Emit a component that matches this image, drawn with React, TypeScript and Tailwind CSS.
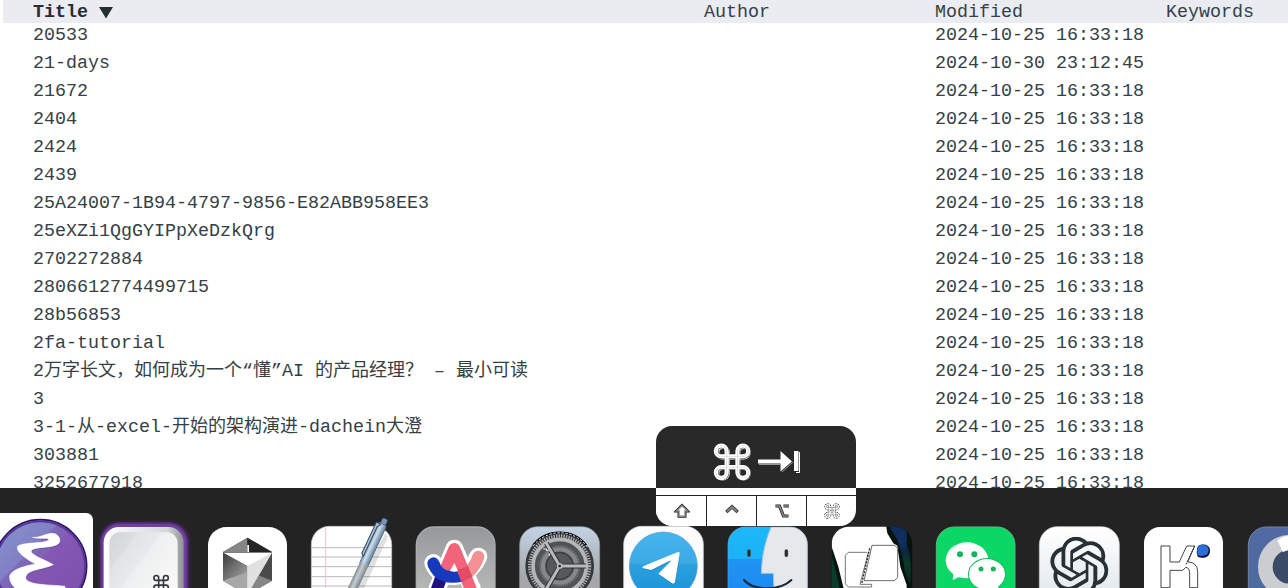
import React from "react";
import { SiOpenai } from "react-icons/si";

const STAMP = "2024-10-25 16:33:18";
const ROWS: [string, string][] = [
  ["20533", STAMP],
  ["21-days", "2024-10-30 23:12:45"],
  ["21672", STAMP],
  ["2404", STAMP],
  ["2424", STAMP],
  ["2439", STAMP],
  ["25A24007-1B94-4797-9856-E82ABB958EE3", STAMP],
  ["25eXZi1QgGYIPpXeDzkQrg", STAMP],
  ["2702272884", STAMP],
  ["2806612774499715", STAMP],
  ["28b56853", STAMP],
  ["2fa-tutorial", STAMP],
  ["2万字长文，如何成为一个“懂”AI 的产品经理？ – 最小可读", STAMP],
  ["3", STAMP],
  ["3-1-从-excel-开始的架构演进-dachein大澄", STAMP],
  ["303881", STAMP],
  ["3252677918", STAMP],
];

const CJK = /([\u3000-\u9fff\uff00-\uffef]+)/;

function Mixed({ text }: { text: string }) {
  return (
    <>
      {text.split(CJK).map((part, i) =>
        CJK.test(part) ? (
          <span key={i} className="font-['Noto_Sans_CJK_SC',sans-serif] text-[18px] leading-none">
            {part}
          </span>
        ) : (
          part
        )
      )}
    </>
  );
}

const COLS = "grid grid-cols-[671px_231px_231px_1fr] whitespace-pre";
const COMMAND = "M15 6v12a3 3 0 1 0 3-3H6a3 3 0 1 0 3 3V6a3 3 0 1 0-3 3h12a3 3 0 1 0-3-3";
const SWIRL =
  "M98 88C118 91 140 76 155 76C174 76 183 92 178 104C168 122 104 114 93 128C92 142 132 154 160 170C132 184 77 184 77 210C80 232 150 230 195 235L195 250L60 250C40 240 28 222 29 205C34 184 76 174 106 168C88 158 50 136 52 118C56 102 128 108 146 97C150 86 116 95 98 88Z";

/* Dock icons are drawn in thirds of a pixel, with the origin at the strip they belong to. */
function Icon({ slot, ox, children }: { slot: number; ox: number; children: React.ReactNode }) {
  return (
    <svg width="104" height="100" viewBox={`${-13 + slot * 104} 488 104 100`} className="shrink-0 overflow-visible">
      <g transform={`translate(${ox} 485) scale(0.33333)`}>{children}</g>
    </svg>
  );
}

function Emacs() {
  return (
    <Icon slot={0} ox={0}>
      <rect x="-40" y="84" width="319" height="300" rx="20" fill="#fff" />
      <defs>
        <linearGradient id="em" x1="0" y1="0" x2="1" y2="1">
          <stop offset="0" stopColor="#8496cf" />
          <stop offset=".36" stopColor="#8180c4" />
          <stop offset=".37" stopColor="#7d6bba" />
          <stop offset=".46" stopColor="#8061b7" />
          <stop offset=".47" stopColor="#8458b4" />
          <stop offset="1" stopColor="#7a4dab" />
        </linearGradient>
      </defs>
      <circle cx="121" cy="243" r="139" fill="url(#em)" stroke="#2c1462" strokeWidth="5" />
      <circle cx="121" cy="243" r="134" fill="none" stroke="#5a3597" strokeWidth="5" />
      <g transform="translate(0 69)">
        <path d={SWIRL} fill="#54407f" opacity=".6" transform="translate(2 3)" />
        <path d={SWIRL} fill="#fff" stroke="#fff" strokeWidth="2" />
      </g>
    </Icon>
  );
}

function Keycap() {
  return (
    <Icon slot={1} ox={0}>
      <defs>
        <linearGradient id="kc" x1="0" y1="0" x2="1" y2="1">
          <stop offset="0" stopColor="#d3d4d6" />
          <stop offset=".2" stopColor="#dcddde" />
          <stop offset=".21" stopColor="#e2e3e4" />
          <stop offset=".38" stopColor="#e8e9ea" />
          <stop offset=".39" stopColor="#eeeff0" />
          <stop offset="1" stopColor="#fff" />
        </linearGradient>
        <linearGradient id="ke">
          <stop offset="0" stopColor="#fff" />
          <stop offset=".8" stopColor="#d4d6d8" />
          <stop offset="1" stopColor="#8d9092" />
        </linearGradient>
      </defs>
      <rect x="294" y="106" width="279" height="300" rx="64" fill="#402457" opacity=".45" />
      <rect x="300" y="112" width="265" height="300" rx="60" fill="#562f7a" />
      <rect x="305" y="117" width="254" height="300" rx="54" fill="#7040a0" />
      <rect x="311" y="126" width="240" height="300" rx="46" fill="url(#ke)" />
      <rect x="328" y="142" width="205" height="280" rx="32" fill="url(#kc)" />
      <path d={COMMAND} transform="translate(454.500 264.500) scale(2.4)" fill="none" stroke="#35383b" strokeWidth="2" />
    </Icon>
  );
}

function Cursor() {
  return (
    <Icon slot={2} ox={0}>
      <defs>
        <linearGradient id="cu" x1="0" y1="0" x2="1" y2="1">
          <stop offset="0" stopColor="#3b3b3b" />
          <stop offset="1" stopColor="#a9a9a9" />
        </linearGradient>
      </defs>
      <rect x="624" y="126" width="237" height="300" rx="55" fill="#fff" />
      <path d="M742 158L816 201V287L742 330L669 287V201Z" fill="#555" />
      <path d="M742 158V201H669Z" fill="#858585" />
      <path d="M742 158V201H816Z" fill="#252525" />
      <path d="M669 203H816L742 330V243Z" fill="#fff" />
      <path d="M669 203L742 243V272L669 287Z" fill="url(#cu)" />
      <path d="M669 287L742 262V330Z" fill="#a8a8a8" />
      <path d="M816 203V287L766 290Z" fill="#4a4a4a" />
      <path d="M768 268L816 287L742 330Z" fill="#858585" />
      <path d="M742 243L816 203L742 330Z" fill="#e1e1e1" />
      <path d="M742 180H747V201H742Z" fill="#fff" />
    </Icon>
  );
}

function TextEdit() {
  return (
    <Icon slot={3} ox={300}>
      <defs>
        <linearGradient id="pn">
          <stop offset="0" stopColor="#6e8aa6" />
          <stop offset=".35" stopColor="#d2e0ea" />
          <stop offset="1" stopColor="#5f7f9f" />
        </linearGradient>
        <linearGradient id="pg">
          <stop offset="0" stopColor="#828b91" />
          <stop offset=".4" stopColor="#c7ced2" />
          <stop offset="1" stopColor="#78838b" />
        </linearGradient>
      </defs>
      <rect x="34" y="124" width="241" height="300" rx="54" fill="#fefefe" stroke="#c8c8c8" strokeWidth="2" />
      <path d="M35 188H274M35 216H274M35 245H274M35 275H274M35 303H274" stroke="#b9bbbd" strokeWidth="3" />
      <path d="M77 127V320" stroke="#f2c3c9" strokeWidth="3" />
      <path d="M256 145L264 155L190 315H165Z" fill="#000" opacity=".12" />
      <g transform="translate(256 101) rotate(25)">
        <rect x="-8" y="0" width="17" height="24" rx="5" fill="#7795ba" stroke="#33485f" strokeWidth="2" />
        <rect x="-14" y="18" width="27" height="136" rx="5" fill="url(#pn)" stroke="#46596b" strokeWidth="2" />
        <rect x="-14" y="148" width="28" height="114" fill="url(#pg)" />
        <path d="M-20 20V124L-12 130V32L-5 22Z" fill="#a9c0d4" stroke="#2e475f" strokeWidth="3" />
      </g>
    </Icon>
  );
}

function Arc() {
  return (
    <Icon slot={4} ox={300}>
      <defs>
        <linearGradient id="ar" x1="0" y1="0" x2="0" y2="1">
          <stop offset="0" stopColor="#969899" />
          <stop offset=".7" stopColor="#b9bbbb" />
        </linearGradient>
      </defs>
      <rect x="349" y="126" width="236" height="300" rx="54" fill="url(#ar)" stroke="#a9abac" strokeWidth="4" />
      <g fill="none" strokeLinecap="round" strokeLinejoin="round">
        <path d="M412 310L463 190L516 310" stroke="#fff" strokeWidth="52" />
        <path d="M400 234C422 288 500 290 535 215" stroke="#fff" strokeWidth="54" />
        <path d="M440 240H485V270H440Z" fill="#fff" stroke="none" />
        <path d="M410 315L424 276" stroke="#20127c" strokeWidth="36" />
        <path d="M502 264C520 250 530 232 535 215" stroke="#f39094" strokeWidth="36" />
        <path d="M439 248L463 192L512 312" stroke="#f1647a" strokeWidth="36" />
        <path d="M400 235C414 276 452 282 488 270" stroke="#1739bd" strokeWidth="36" strokeLinecap="butt" />
        <path d="M400 235L401 238" stroke="#1739bd" strokeWidth="36" />
        <path d="M487 250L501 283" stroke="#e34c64" strokeWidth="36" strokeLinecap="butt" />
      </g>
      <path d="M463 234L474 258Q463 262 450 258Z" fill="#fff" />
    </Icon>
  );
}

function Settings() {
  return (
    <Icon slot={5} ox={300}>
      <defs>
        <linearGradient id="st" x1="0" y1="0" x2="0" y2="1">
          <stop offset="0" stopColor="#c3d3e4" />
          <stop offset=".5" stopColor="#a5a8ab" />
        </linearGradient>
      </defs>
      <rect x="659" y="125" width="240" height="300" rx="54" fill="url(#st)" stroke="#96999c" strokeWidth="2" />
      <circle cx="779" cy="243" r="103" fill="#34373a" />
      <path d="M699 180A103 103 0 0 1 859 180" fill="none" stroke="#000" strokeWidth="5" />
      <path d="M700 182A101 101 0 0 1 862 186" fill="none" stroke="#fff" strokeWidth="3" strokeDasharray="7 5" />
      <circle cx="779" cy="243" r="90" fill="none" stroke="#aeb1b2" strokeWidth="10" strokeDasharray="4 3.500" />
      <circle cx="779" cy="243" r="80" fill="#505355" stroke="#b4b7b8" strokeWidth="11" />
      <circle cx="779" cy="243" r="59" fill="none" stroke="#7f8284" strokeWidth="5" strokeDasharray="3 3" />
      <circle cx="779" cy="243" r="50" fill="#46494b" stroke="#85888a" strokeWidth="13" />
      <circle cx="779" cy="243" r="40" fill="#56595b" stroke="#35383a" strokeWidth="3" />
      <path d="M779 243H858M779 243L739 174M779 243L739 312" stroke="#333638" strokeWidth="15" />
      <path d="M779 243H862M779 243L737 171M779 243L737 315" stroke="#b8bbbc" strokeWidth="9" />
      <circle cx="779" cy="243" r="9" fill="#b8bbbc" />
      <circle cx="779" cy="243" r="4" fill="#222" />
      <path d="M730 192H740V197H746M748 206V212" stroke="#fff" strokeWidth="3" fill="none" />
    </Icon>
  );
}

function Telegram() {
  const plane =
    "M204 201Q210 200 209 208L195 290Q193 299 185 294L145 266L181 230Q184 224 177 228L124 255L100 250Q94 247 101 243Z";
  return (
    <Icon slot={6} ox={610}>
      <defs>
        <linearGradient id="tg" x1="0" y1="0" x2="0" y2="1">
          <stop offset="0" stopColor="#46b4ee" />
          <stop offset=".46" stopColor="#3caae4" />
          <stop offset=".48" stopColor="#2ca0df" />
          <stop offset="1" stopColor="#1791d4" />
        </linearGradient>
      </defs>
      <rect x="41" y="124" width="239" height="300" rx="54" fill="#fcfcfd" stroke="#d5d7d9" strokeWidth="2" />
      <circle cx="160" cy="243" r="102" fill="url(#tg)" stroke="#5c9ac8" strokeWidth="2" />
      <path d={plane} fill="#1a79b2" opacity=".45" transform="translate(2 4)" />
      <path d={plane} fill="#fff" />
    </Icon>
  );
}

function Finder() {
  return (
    <Icon slot={7} ox={610}>
      <defs>
        <clipPath id="fc">
          <rect x="353" y="125" width="240" height="300" rx="54" />
        </clipPath>
        <linearGradient id="fl" x1="0" y1="0" x2="0" y2="1">
          <stop offset="0" stopColor="#1cb8f7" />
          <stop offset=".5" stopColor="#1ab3f6" />
          <stop offset=".52" stopColor="#1e94f3" />
          <stop offset="1" stopColor="#1e8cf2" />
        </linearGradient>
      </defs>
      <g clipPath="url(#fc)">
        <rect x="353" y="125" width="240" height="190" fill="url(#fl)" />
        <path d="M484 125H600V320H492L490 265H454C455 215 466 165 484 125Z" fill="#e6e8eb" />
        <path d="M484 125C466 165 455 215 454 265H490L492 312" fill="none" stroke="#9ec6e4" strokeWidth="3" />
        <path d="M417 198V211M529 198V211" stroke="#5c5450" strokeWidth="11" strokeLinecap="round" />
        <path d="M417 198V211M529 198V211" stroke="#252a31" strokeWidth="7" strokeLinecap="round" />
        <path d="M402 285C430 318 510 318 544 285" fill="none" stroke="#16283c" strokeWidth="6" strokeLinecap="round" />
      </g>
      <rect x="354" y="126" width="238" height="300" rx="53" fill="none" stroke="#8ea3b0" strokeWidth="2" opacity=".7" />
    </Icon>
  );
}

function Panels() {
  return (
    <Icon slot={8} ox={610}>
      <defs>
        <clipPath id="pc">
          <rect x="665" y="125" width="242" height="300" rx="52" />
        </clipPath>
        <linearGradient id="pd" x1="0" y1="0" x2="0" y2="1">
          <stop offset="0" stopColor="#123266" />
          <stop offset=".28" stopColor="#0c2740" />
          <stop offset=".5" stopColor="#0b3a27" />
          <stop offset="1" stopColor="#062a1d" />
        </linearGradient>
      </defs>
      <g clipPath="url(#pc)">
        <rect x="664" y="124" width="244" height="190" fill="#06130e" />
        <path d="M835 120H890V190L875 185Z" fill="#102e5c" />
        <path d="M862 165C890 155 910 210 900 300L885 260C880 220 872 190 862 165Z" fill="url(#pd)" />
        <path d="M664 205L690 312H664Z" fill="#0b3c2a" />
        <path d="M665 120H828L832 145L850 175L862 182L871 245L890 300V315H702L685 245L665 185Z" fill="#fff" />
      </g>
      <path d="M786 181H854L863 190V277L853 287H762Z" fill="#fff" stroke="#222" strokeWidth="2" />
      <path d="M771 202H715L706 211V296L715 306H785V298H750L775 202" fill="none" stroke="#333" strokeWidth="2" />
      <path d="M779 190L755 296" stroke="#222" strokeWidth="4" strokeDasharray="6 4" />
    </Icon>
  );
}

function WeChat() {
  return (
    <Icon slot={9} ox={915}>
      <rect x="64" y="126" width="236" height="300" rx="54" fill="#0bd766" stroke="#5cb982" strokeWidth="3" />
      <g fill="#fff">
        <ellipse cx="156" cy="226" rx="64" ry="54" />
        <path d="M116 258L113 285L140 272Z" />
        <ellipse cx="216" cy="268" rx="57" ry="49" fill="#14b85d" />
        <ellipse cx="216" cy="268" rx="54" ry="46" />
        <path d="M225 305L250 312V290Z" />
      </g>
      <g fill="#12b75b">
        <circle cx="135" cy="208" r="9" />
        <circle cx="178" cy="208" r="9" />
        <circle cx="198" cy="252" r="7.500" />
        <circle cx="235" cy="252" r="7.500" />
      </g>
    </Icon>
  );
}

function ChatGPT() {
  return (
    <Icon slot={10} ox={915}>
      <defs>
        <linearGradient id="cg" x1="0" y1="0" x2="0" y2="1">
          <stop offset="0" stopColor="#fff" />
          <stop offset=".6" stopColor="#e6ebee" />
        </linearGradient>
      </defs>
      <rect x="373" y="125" width="240" height="300" rx="54" fill="url(#cg)" stroke="#cfd3d6" strokeWidth="2" />
      <SiOpenai x={405} y={155} size={176} color="#263035" />
    </Icon>
  );
}

function Kimi() {
  return (
    <Icon slot={11} ox={915}>
      <rect x="687" y="126" width="237" height="300" rx="48" fill="#fff" />
      <path
        d="M738 183H765V231H793L815 183H839L818 231Q848 231 848 262V308H824V268Q824 247 812 247L803 256H765V308H738Z"
        fill="#fff"
        stroke="#222"
        strokeWidth="2.500"
      />
      <path d="M839 183L813 238" stroke="#111" strokeWidth="3" strokeDasharray="5 3" />
      <path d="M849 183C859 175 885 176 885 197C885 216 866 221 852 217C843 213 844 195 849 183Z" fill="#070c28" />
      <path d="M850 184C858 176 881 178 881 196C881 213 863 215 848 211C846 203 846 191 850 184Z" fill="#2c6ddc" />
    </Icon>
  );
}

function RingApp() {
  return (
    <Icon slot={12} ox={915}>
      <rect x="1000" y="126" width="240" height="300" rx="54" fill="#5069a3" stroke="#74849f" strokeWidth="3" />
      <path d="M1002 245L1045 300V330H1002Z" fill="#4d6c9d" />
      <circle cx="1124" cy="245" r="73" fill="#3b4a67" stroke="#cccdd0" strokeWidth="44" />
      <path d="M1087 166Q1105 151 1130 150V194Q1115 195 1104 202Z" fill="#fff" />
    </Icon>
  );
}

function HudKey({ children }: { children: React.ReactNode }) {
  return (
    <div className="flex w-[50px] items-center justify-center border-l border-[#222] first:border-white">
      <svg width="16" height="16" viewBox="0 0 16 16" fill="none">
        {children}
      </svg>
    </div>
  );
}

function Hud() {
  const shift = "M8 2.500L13.500 8H11V13.300H5V8H2.500Z";
  const option = "M1.500 3H5.500L9.500 13H14.500M9.500 3H15";
  return (
    <div className="absolute left-[656px] top-[426px] flex h-[100px] w-[200px] flex-col overflow-hidden rounded-[16px] bg-white">
      <div className="flex h-[62px] items-center justify-center bg-[#292929]">
        <svg width="200" height="62" viewBox="656 426 200 62" fill="none">
          <g transform="translate(.6 .3)">
            <path d={COMMAND} transform="translate(711.500 441.500) scale(1.75)" stroke="#fff" strokeWidth="2.300" />
            <path d={COMMAND} transform="translate(709.900 439.900) scale(1.8)" stroke="#292929" strokeWidth="2.900" />
            <path d={COMMAND} transform="translate(709.900 439.900) scale(1.8)" stroke="#fff" strokeWidth="2.400" />
            <path d={COMMAND} transform="translate(709.900 439.900) scale(1.8)" stroke="#cfcfcf" strokeWidth=".35" />
          </g>
          <path d="M758 459.500H780.500V451L792 461.500L780.500 471.500V463.500H758Z" fill="#fff" />
          <path d="M759 464.500H780M782 472L793 462" stroke="#999" />
          <path d="M794 451H798.500V471H794Z" fill="#fff" />
          <path d="M799.500 452V472.500H796" stroke="#fff" />
        </svg>
      </div>
      <div className="mt-[7px] flex h-[31px] border-t border-[#222]">
        <HudKey>
          <path d={shift} stroke="#222" strokeWidth="3" />
          <path d={shift} stroke="#858585" strokeWidth="1.500" fill="#fff" />
        </HudKey>
        <HudKey>
          <path d="M2.300 9L8 3.800L13.700 9" stroke="#333" strokeWidth="3.400" />
          <path d="M3 8.400L8 4L13 8.400" stroke="#888" strokeWidth="1.800" />
        </HudKey>
        <HudKey>
          <path d={option} stroke="#222" strokeWidth="3.200" />
          <path d={option} stroke="#8a8a8a" strokeWidth="1.600" />
        </HudKey>
        <HudKey>
          <path d={COMMAND} transform="translate(-.4 -.4) scale(.7)" stroke="#333" strokeWidth="3.800" strokeDasharray="1.600 .7" />
          <path d={COMMAND} transform="translate(-.4 -.4) scale(.7)" stroke="#fff" strokeWidth="1.900" />
        </HudKey>
      </div>
    </div>
  );
}

export default function App() {
  return (
    <div className="relative flex h-[588px] w-[1288px] flex-col overflow-hidden bg-white font-['Liberation_Mono','Noto_Sans_CJK_SC',monospace] text-[18.33px] text-[#354045]">
      <div className="flex h-[488px] flex-col overflow-hidden">
        <header className={`${COLS} ml-[3px] h-[23px] shrink-0 bg-[#ebecf1] pl-[30px] leading-[26px]`}>
          <div className="flex font-bold text-[#252e32]">
            Title
            <svg width="16" height="23" viewBox="0 0 16 23" className="ml-[10px]">
              <path d="M1 7H15L8 18.500Z" fill="#252e32" />
            </svg>
          </div>
          <div>Author</div>
          <div>Modified</div>
          <div>Keywords</div>
        </header>
        <main className="-mt-[2px] flex flex-col">
          {ROWS.map(([title, modified]) => (
            <div key={title} className={`${COLS} h-[28px] shrink-0 pl-[33px] leading-[30px]`}>
              <div>
                <Mixed text={title} />
              </div>
              <div />
              <div>{modified}</div>
            </div>
          ))}
        </main>
      </div>
      <nav className="flex h-[100px] overflow-hidden bg-[#232323]">
        <div className="-ml-[13px] flex">
          <Emacs />
          <Keycap />
          <Cursor />
          <TextEdit />
          <Arc />
          <Settings />
          <Telegram />
          <Finder />
          <Panels />
          <WeChat />
          <ChatGPT />
          <Kimi />
          <RingApp />
        </div>
      </nav>
      <Hud />
    </div>
  );
}
